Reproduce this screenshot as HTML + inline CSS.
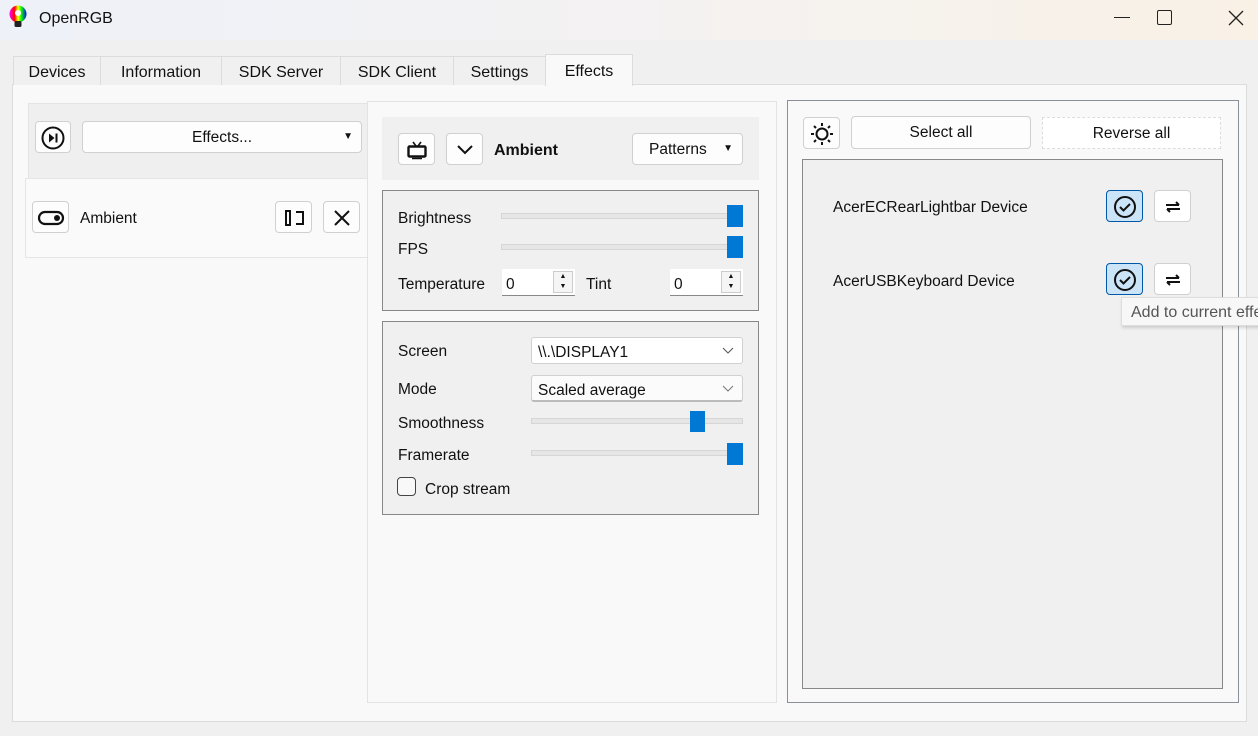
<!DOCTYPE html><html><head><style>
*{box-sizing:border-box;margin:0;padding:0}
body{width:1258px;height:736px;background:#f0f0f0;font-family:"Liberation Sans",sans-serif;font-size:15.5px;color:#111;position:relative;overflow:hidden}
.a{position:absolute}
.btn{position:absolute;background:#fdfdfd;border:1px solid #d0d0d0;border-radius:4px;display:flex;align-items:center;justify-content:center;padding-top:1px}
.t{position:absolute;white-space:nowrap;margin-top:1px}
.tab{position:absolute;top:56px;height:29px;border:1px solid #dcdcdc;border-bottom:none;background:#f0f0f0;display:flex;align-items:center;justify-content:center;font-size:16px;padding-top:3px}
.groove{position:absolute;height:6px;background:#e6e6e6;border:1px solid #d6d6d6}
.h{position:absolute;background:#0078d4;width:16px;height:22px}
.spin{position:absolute;background:#fff;border-bottom:1px solid #888;height:27px}
</style></head><body>
<div class="a" style="left:0;top:0;width:1258px;height:40px;background:linear-gradient(90deg,#eef1f8,#f4f2f2 50%,#f9f1e6)"></div>
<svg class="a" style="left:8px;top:5px" width="20" height="24" viewBox="0 0 20 24"><defs><linearGradient id="g" x1="0" x2="1"><stop offset="0" stop-color="#f0f"/><stop offset=".3" stop-color="#f00"/><stop offset=".5" stop-color="#ff0"/><stop offset=".7" stop-color="#0f0"/><stop offset="1" stop-color="#00f"/></linearGradient></defs><circle cx="10" cy="9" r="8.5" fill="url(#g)"/><circle cx="10" cy="8" r="3" fill="#fff"/><rect x="6.5" y="16" width="7" height="6" rx="1.5" fill="#222"/></svg>
<div class="t" style="left:39px;top:9px;font-size:16px">OpenRGB</div>
<div class="a" style="left:1114px;top:17px;width:16px;height:1px;background:#222"></div>
<div class="a" style="left:1157px;top:10px;width:15px;height:15px;border:1.5px solid #222;border-radius:2px"></div>
<svg class="a" style="left:1228px;top:10px" width="16" height="16"><path d="M1 1L15 15M15 1L1 15" stroke="#222" stroke-width="1.3"/></svg>

<div class="a" style="left:12px;top:84px;width:1235px;height:638px;background:#f9f9f9;border:1px solid #dcdcdc"></div>
<div class="tab" style="left:13px;width:88px">Devices</div>
<div class="tab" style="left:100px;width:122px">Information</div>
<div class="tab" style="left:221px;width:120px">SDK Server</div>
<div class="tab" style="left:340px;width:114px">SDK Client</div>
<div class="tab" style="left:453px;width:93px">Settings</div>
<div class="tab" style="left:545px;width:88px;top:54px;height:32px;background:#f9f9f9">Effects</div>

<div class="a" style="left:28px;top:103px;width:340px;height:76px;background:#efefef;border:1px solid #e3e3e3"></div>
<div class="btn" style="left:35px;top:121px;width:36px;height:32px"><svg width="26" height="26" viewBox="0 0 26 26"><circle cx="13" cy="13" r="10.5" fill="none" stroke="#111" stroke-width="2"/><path d="M9 8.5L14.5 13L9 17.5Z" fill="#111"/><rect x="15.5" y="8.5" width="2" height="9" fill="#111"/></svg></div>
<div class="btn" style="left:82px;top:121px;width:280px;height:32px"><span>Effects...</span><span class="a" style="right:8px;top:9px;font-size:10px">▼</span></div>
<div class="a" style="left:25px;top:178px;width:343px;height:80px;background:#fafafa;border:1px solid #e5e5e5"></div>
<div class="btn" style="left:32px;top:201px;width:37px;height:32px"><svg width="28" height="16"><rect x="2" y="2" width="24" height="12" rx="6" fill="none" stroke="#111" stroke-width="2.2"/><circle cx="20" cy="8" r="3" fill="#111"/></svg></div>
<div class="t" style="left:80px;top:209px">Ambient</div>
<div class="btn" style="left:275px;top:201px;width:37px;height:32px"><svg width="24" height="18"><path d="M9 2H4V16H9M8 1V17M14 3H21V15H14" fill="none" stroke="#111" stroke-width="2"/></svg></div>
<div class="btn" style="left:323px;top:201px;width:37px;height:32px"><svg width="18" height="18"><path d="M2 2L16 16M16 2L2 16" stroke="#111" stroke-width="2"/></svg></div>

<div class="a" style="left:367px;top:101px;width:410px;height:602px;background:#f9f9f9;border:1px solid #e3e3e3"></div>
<div class="a" style="left:382px;top:117px;width:377px;height:63px;background:#f0f0f0"></div>
<div class="btn" style="left:398px;top:133px;width:37px;height:32px"><svg width="22" height="20"><path d="M7 2L10 6M15 2L12 6" stroke="#111" stroke-width="1.6"/><rect x="2.5" y="6.5" width="17" height="10" rx="1" fill="none" stroke="#111" stroke-width="2.4"/><path d="M6 18.5H16" stroke="#111" stroke-width="1.5"/></svg></div>
<div class="btn" style="left:446px;top:133px;width:37px;height:32px"><svg width="18" height="12"><path d="M2 2L9 9L16 2" fill="none" stroke="#111" stroke-width="2"/></svg></div>
<div class="t" style="left:494px;top:141px;font-weight:bold;font-size:16px">Ambient</div>
<div class="btn" style="left:632px;top:133px;width:111px;height:32px;justify-content:flex-start;padding-left:16px">Patterns<span class="a" style="right:9px;top:9px;font-size:10px">▼</span></div>

<div class="a" style="left:382px;top:190px;width:377px;height:121px;background:#f0f0f0;border:1px solid #888"></div>
<div class="t" style="left:398px;top:209px">Brightness</div>
<div class="groove" style="left:501px;top:213px;width:242px"></div><div class="h" style="left:727px;top:205px"></div>
<div class="t" style="left:398px;top:240px">FPS</div>
<div class="groove" style="left:501px;top:244px;width:242px"></div><div class="h" style="left:727px;top:236px"></div>
<div class="t" style="left:398px;top:275px">Temperature</div>
<div class="spin" style="left:502px;top:269px;width:73px"><span class="a" style="left:4px;top:7px">0</span><div class="a" style="right:2px;top:2px;width:20px;height:22px;border:1px solid #ccc;background:#f5f5f5;font-size:7px;text-align:center;line-height:10px">▲<br>▼</div></div>
<div class="t" style="left:586px;top:275px">Tint</div>
<div class="spin" style="left:670px;top:269px;width:73px"><span class="a" style="left:4px;top:7px">0</span><div class="a" style="right:2px;top:2px;width:20px;height:22px;border:1px solid #ccc;background:#f5f5f5;font-size:7px;text-align:center;line-height:10px">▲<br>▼</div></div>

<div class="a" style="left:382px;top:321px;width:377px;height:194px;background:#f0f0f0;border:1px solid #888"></div>
<div class="t" style="left:398px;top:342px">Screen</div>
<div class="a" style="left:531px;top:337px;width:212px;height:27px;background:#fff;border:1px solid #d0d0d0;border-radius:3px"><span class="a" style="left:6px;top:6px">\\.\DISPLAY1</span><svg class="a" style="right:8px;top:9px" width="12" height="8"><path d="M1 1L6 6L11 1" fill="none" stroke="#555"/></svg></div>
<div class="t" style="left:398px;top:380px">Mode</div>
<div class="a" style="left:531px;top:375px;width:212px;height:27px;background:#fbfbfb;border:1px solid #d0d0d0;border-bottom:2px solid #bbb;border-radius:3px"><span class="a" style="left:6px;top:6px">Scaled average</span><svg class="a" style="right:8px;top:9px" width="12" height="8"><path d="M1 1L6 6L11 1" fill="none" stroke="#777"/></svg></div>
<div class="t" style="left:398px;top:414px">Smoothness</div>
<div class="groove" style="left:531px;top:418px;width:212px"></div><div class="h" style="left:690px;top:411px;width:15px;height:21px"></div>
<div class="t" style="left:398px;top:446px">Framerate</div>
<div class="groove" style="left:531px;top:450px;width:212px"></div><div class="h" style="left:727px;top:443px"></div>
<div class="a" style="left:397px;top:477px;width:19px;height:19px;border:1px solid #444;border-radius:4px;background:#f8f8f8"></div>
<div class="t" style="left:425px;top:480px">Crop stream</div>

<div class="a" style="left:787px;top:100px;width:452px;height:603px;background:#f9f9f9;border:1px solid #8a8f99"></div>
<div class="btn" style="left:803px;top:117px;width:37px;height:32px"><svg width="26" height="26" viewBox="0 0 26 26"><circle cx="13" cy="13" r="5.5" fill="none" stroke="#111" stroke-width="2"/><path d="M13 2V5M13 21V24M2 13H5M21 13H24M5 5L7 7M19 19L21 21M5 21L7 19M19 7L21 5" stroke="#111" stroke-width="2"/></svg></div>
<div class="btn" style="left:851px;top:116px;width:180px;height:33px">Select all</div>
<div class="btn" style="left:1042px;top:117px;width:179px;height:32px;border:1px dashed #ddd;border-radius:0;background:#fff">Reverse all</div>
<div class="a" style="left:802px;top:159px;width:421px;height:530px;background:#f0f0f0;border:1px solid #888"></div>
<div class="t" style="left:833px;top:198px">AcerECRearLightbar Device</div>
<div class="t" style="left:833px;top:272px">AcerUSBKeyboard Device</div>
<div class="btn" style="left:1106px;top:190px;width:37px;height:32px;background:#cce4f7;border-color:#0059a8"><svg width="24" height="24"><circle cx="12" cy="12" r="10" fill="none" stroke="#111" stroke-width="2"/><path d="M7 12L10.5 15.5L17 9" fill="none" stroke="#111" stroke-width="2"/></svg></div>
<div class="btn" style="left:1154px;top:190px;width:37px;height:32px;background:#fff"><svg width="18" height="12"><path d="M2 4H15M12 1L15 4M16 8H3M6 11L3 8" fill="none" stroke="#111" stroke-width="2"/></svg></div>
<div class="btn" style="left:1106px;top:263px;width:37px;height:32px;background:#cce4f7;border-color:#0059a8"><svg width="24" height="24"><circle cx="12" cy="12" r="10" fill="none" stroke="#111" stroke-width="2"/><path d="M7 12L10.5 15.5L17 9" fill="none" stroke="#111" stroke-width="2"/></svg></div>
<div class="btn" style="left:1154px;top:263px;width:37px;height:32px;background:#fff"><svg width="18" height="12"><path d="M2 4H15M12 1L15 4M16 8H3M6 11L3 8" fill="none" stroke="#111" stroke-width="2"/></svg></div>
<div class="a" style="left:1121px;top:297px;width:150px;height:29px;background:#f7f7f7;border:1px solid #ddd;box-shadow:1px 2px 3px rgba(0,0,0,.15)"><span class="a" style="left:9px;top:6px;color:#555;font-size:16px;white-space:nowrap">Add to current effect</span></div>
</body></html>
